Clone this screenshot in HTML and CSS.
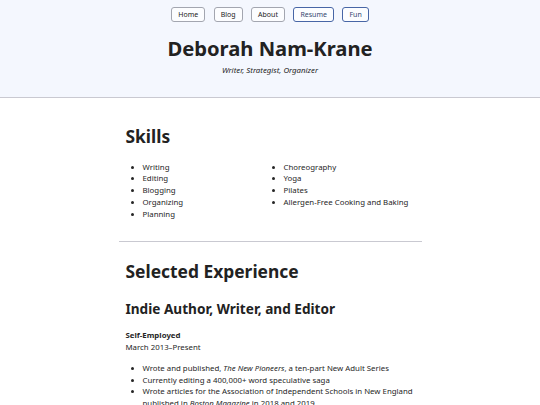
FILE: index.html
```html
<!DOCTYPE html>
<html>
<head>
<meta charset="utf-8">
<link rel="stylesheet" href="styles.css">
</head>
<body>
<header class="site-header">
  <nav class="nav">
    <a class="nav-btn" href="#">Home</a>
    <a class="nav-btn" href="#">Blog</a>
    <a class="nav-btn" href="#">About</a>
    <a class="nav-btn active" href="#">Resume</a>
    <a class="nav-btn active" href="#">Fun</a>
  </nav>
  <h1 class="title">Deborah Nam-Krane</h1>
  <p class="tagline">Writer, Strategist, Organizer</p>
</header>
<main class="content">
  <section class="section">
    <h2 class="section-title">Skills</h2>
    <div class="skills">
      <ul class="list">
        <li>Writing</li>
        <li>Editing</li>
        <li>Blogging</li>
        <li>Organizing</li>
        <li>Planning</li>
      </ul>
      <ul class="list">
        <li>Choreography</li>
        <li>Yoga</li>
        <li>Pilates</li>
        <li>Allergen-Free Cooking and Baking</li>
      </ul>
    </div>
  </section>
  <hr class="divider">
  <section class="section">
    <h2 class="section-title">Selected Experience</h2>
    <h3 class="job-title">Indie Author, Writer, and Editor</h3>
    <p class="employer"><strong>Self-Employed</strong><br>March 2013–Present</p>
    <ul class="list">
      <li>Wrote and published, <em>The New Pioneers</em>, a ten-part New Adult Series</li>
      <li>Currently editing a 400,000+ word speculative saga</li>
      <li>Wrote articles for the Association of Independent Schools in New England published in <em>Boston Magazine</em> in 2018 and 2019</li>
    </ul>
  </section>
</main>
</body>
</html>
```
FILE: styles.css
```css
* { box-sizing: border-box; }
html, body { margin: 0; padding: 0; }
body {
  font-family: "Noto Sans", "Open Sans", sans-serif;
  color: #262626;
  background: #fff;
  font-size: 7.84px;
  line-height: 11.76px;
}
.site-header {
  background: #f4f7fe;
  border-bottom: 1px solid #c9c9d1;
  padding: 7px 0 20px;
  text-align: center;
}
.nav {
  display: flex;
  justify-content: center;
  gap: 8.5px;
}
.nav-btn {
  display: inline-block;
  font-size: 7px;
  line-height: 13px;
  padding: 0 6px;
  border: 1px solid #a3a6b0;
  border-radius: 3px;
  background: #fcfdff;
  color: #222;
  text-decoration: none;
}
.nav-btn.active {
  border-color: #4866a6;
  color: #34476f;
}
.title {
  font-size: 20.2px;
  font-weight: 700;
  margin: 14px 0 0;
  line-height: 24px;
  color: #222;
}
.tagline {
  font-style: italic;
  font-size: 7.84px;
  margin: 5px 0 0;
}
.content {
  width: 303px;
  margin: 0 auto;
  padding: 28.5px 7px 0;
}
.section-title {
  font-size: 17.4px;
  font-weight: 700;
  margin: 0 0 14.4px;
  line-height: 21px;
  color: #222;
}
.skills {
  display: grid;
  grid-template-columns: 141px 1fr;
}
.list {
  margin: 0;
  padding-left: 17px;
}
.divider {
  border: 0;
  border-top: 1px solid #c9c9d1;
  margin: 20.2px -7px 19px;
}
.section-title + .job-title {
  margin-top: 19.4px;
}
.job-title {
  font-size: 13.6px;
  font-weight: 700;
  margin: 0 0 12.4px;
  line-height: 16.3px;
  color: #222;
}
.employer {
  margin: 0 0 9.6px;
}
```
